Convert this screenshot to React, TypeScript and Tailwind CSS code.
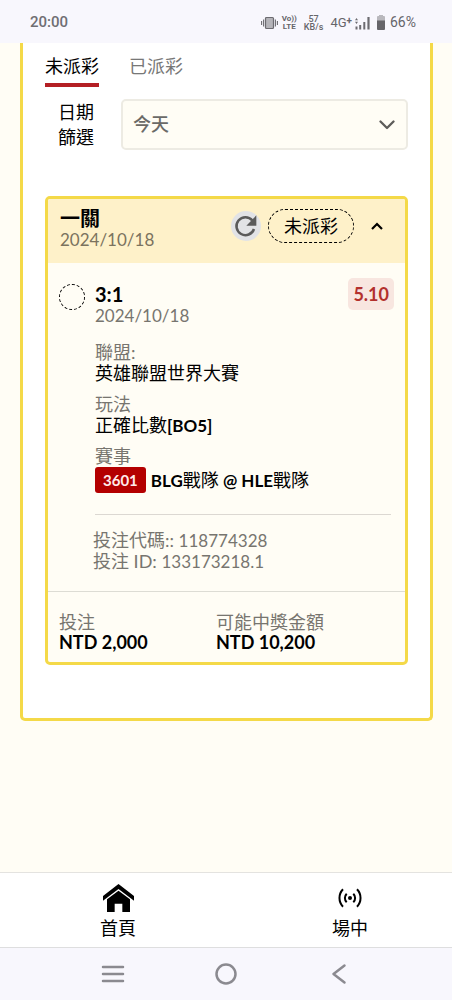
import { useState } from "react";

function StatusBar() {
  return (
    <header className="flex h-[43px] items-center justify-between bg-[#f8f7fd] pt-[2px] pr-9 pl-[30px] font-['Roboto',sans-serif] text-[#66656a]">
      <span className="text-[15px] font-medium text-[#6f6e73]">20:00</span>
      <div className="flex items-center">
        <svg className="h-[14px] w-[17px]" viewBox="0 0 17 14" fill="none" stroke="#6c6b70" aria-hidden="true">
          <rect x="4.500" y="1.500" width="8" height="11" rx="1" fill="#b5b4b9" strokeWidth="1.200" />
          <path d="M.6 5v4M2.600 3.500v7M14.400 3.500v7M16.400 5v4" strokeWidth="1.100" />
        </svg>
        <div className="ml-1 text-center text-[8px] leading-[8px] font-bold">
          <div>Vo))</div>
          <div>LTE</div>
        </div>
        <div className="ml-[7px] text-center text-[9px] leading-[8px] font-medium">
          <div>57</div>
          <div>KB/s</div>
        </div>
        <div className="ml-[7px] flex text-[13px] leading-4">
          4G<span className="text-[10px] leading-3 font-bold">+</span>
        </div>
        <svg className="ml-[3px] h-[14px] w-[15px]" viewBox="0 0 15 14" fill="#6c6b70" aria-hidden="true">
          <path d="M4.200 9h2v4.500h-2zM8.300 6h2v7.500h-2zM12.400 1h2.200v12.500h-2.200zM.5 10.500h2v3h-2zM1.500 2l1.500 2.200H0zM1.500 8L0 5.800h3z" />
        </svg>
        <svg className="ml-[7px] h-[15px] w-[8px]" viewBox="0 0 8 15" aria-hidden="true">
          <path d="M2 0h4v1h1a1 1 0 0 1 1 1V6H0V2a1 1 0 0 1 1-1h1z" fill="#b9b8bd" />
          <path d="M0 5.500h8V14a1 1 0 0 1-1 1H1a1 1 0 0 1-1-1z" fill="#66656a" />
        </svg>
        <span className="ml-[5px] text-[14px]">66%</span>
      </div>
    </header>
  );
}

function RefreshIcon() {
  return (
    <svg className="size-[30px]" viewBox="0 0 90 90" aria-hidden="true">
      <circle cx="45" cy="45" r="45" fill="#e2e3e6" />
      <path d="M64 28A27 27 0 1 0 69 54" fill="none" stroke="#5b5b5b" strokeWidth="7.500" />
      <path d="M76 13v31H46z" fill="#5b5b5b" />
    </svg>
  );
}

function Detail({ label, children }: { label: string; children: React.ReactNode }) {
  return (
    <div>
      <dt className="text-[#77756f]">{label}</dt>
      <dd>{children}</dd>
    </div>
  );
}

function BetCard() {
  const [open, setOpen] = useState(true);
  return (
    <article className="mt-[46px] overflow-hidden rounded-[5px] border-3 border-[#f4d948] bg-[#fffdf5]">
      <div className="flex items-start justify-between bg-[#fef1c9] px-3 pt-2 pb-3">
        <div className="leading-[22px]">
          <h2 className="text-[20px] font-bold">一關</h2>
          <time className="block text-[17px] text-[#7b735e]">2024/10/18</time>
        </div>
        <div className="-mr-[3px] flex items-center pt-[2px]">
          <button type="button" aria-label="重新整理">
            <RefreshIcon />
          </button>
          <span className="ml-[7px] flex h-[34px] items-center rounded-full border border-dashed border-black px-[15px]">
            未派彩
          </span>
          <button
            type="button"
            aria-label="展開或收合"
            aria-expanded={open}
            onClick={() => setOpen(!open)}
            className="ml-1 flex h-[34px] w-[38px] items-center justify-center"
          >
            <svg className={open ? "h-[8px] w-[12px]" : "h-[8px] w-[12px] rotate-180"} viewBox="0 0 12 8" fill="none" stroke="black" strokeWidth="2.200" aria-hidden="true">
              <path d="M1 7l5-5 5 5" />
            </svg>
          </button>
        </div>
      </div>

      {open && (
        <div className="px-[11px] pt-[15px] pb-[19px]">
          <div className="flex items-start">
            <span className="mt-[6px] size-[26px] rounded-full border border-dashed border-black" />
            <div className="mt-[6px] ml-[10px] flex-1 leading-[21px]">
              <h3 className="text-[20px] leading-[21px] font-bold">3:1</h3>
              <time className="block text-[17px] text-[#77756f]">2024/10/18</time>
            </div>
            <strong className="flex h-8 items-center rounded-[5px] bg-[#f8e6e0] px-[5px] font-bold text-[#b3302d]">
              5.10
            </strong>
          </div>
          <dl className="mt-4 flex flex-col gap-[10px] pl-9 leading-[21px]">
            <Detail label="聯盟:">英雄聯盟世界大賽</Detail>
            <Detail label="玩法">
              正確比數<b className="text-[17px]">[BO5]</b>
            </Detail>
            <Detail label="賽事">
              <span className="flex items-center gap-[5px]">
                <span className="flex h-[26px] items-center rounded-[3px] bg-[#b40000] px-2 text-[15px] font-bold text-[#ffeaea]">
                  3601
                </span>
                <span>
                  <b className="text-[17px]">BLG</b>戰隊<b className="text-[17px]"> @ HLE</b>戰隊
                </span>
              </span>
            </Detail>
          </dl>
          <hr className="mt-[21px] mr-[3px] ml-9 border-[#dcd8d2]" />
          <div className="mt-[15px] pl-[34px] leading-5 text-[#77756f]">
            <p>
              投注代碼:: <span className="text-[17px]">118774328</span>
            </p>
            <p>
              投注 ID: <span className="text-[17px]">133173218.1</span>
            </p>
          </div>
        </div>
      )}

      <dl className="grid grid-cols-[157px_1fr] border-t border-[#dddcd4] px-[11px] pt-5 pb-[10px] leading-5">
        <div>
          <dt className="text-[#77756f]">投注</dt>
          <dd className="font-bold">NTD 2,000</dd>
        </div>
        <div>
          <dt className="text-[#77756f]">可能中獎金額</dt>
          <dd className="font-bold">NTD 10,200</dd>
        </div>
      </dl>
    </article>
  );
}

function BottomNav() {
  return (
    <nav className="mt-auto flex h-[75px] justify-between border-t border-[#e4e3e0] bg-white pr-[84px] pl-[100px]">
      <a href="#home" className="flex flex-col items-center pt-[11px]">
        <svg className="h-7 w-[31px]" viewBox="309 72 93 84" aria-hidden="true">
          <path d="M355.500 72L402 108v14L355.500 87 309 122v-14z" />
          <path d="M355.500 92L390 118v38h-23v-25h-23v25h-23v-38z" />
        </svg>
        <span className="mt-1 leading-6">首頁</span>
      </a>
      <a href="#live" className="flex flex-col items-center pt-[11px]">
        <svg className="h-7 w-6" viewBox="0 0 24 28" fill="none" stroke="black" strokeWidth="2" aria-hidden="true">
          <circle cx="12" cy="14" r="2" fill="black" stroke="none" />
          <path d="M8.700 9.700a6 6 0 0 0 0 8.600M15.300 9.700a6 6 0 0 1 0 8.600M5 5.300a12.500 12.500 0 0 0 0 17.400M19 5.300a12.500 12.500 0 0 1 0 17.400" />
        </svg>
        <span className="mt-1 leading-6">場中</span>
      </a>
    </nav>
  );
}

function SystemBar() {
  return (
    <footer className="grid h-[53px] grid-cols-3 items-center justify-items-center border-t border-[#dededf] bg-[#f8f7fd] px-14">
      <button type="button" aria-label="最近使用">
        <svg className="h-6 w-6" viewBox="0 0 24 24" stroke="#8b8a90" strokeWidth="2.500" strokeLinecap="round" aria-hidden="true">
          <path d="M2 5h20M2 12h20M2 19h20" />
        </svg>
      </button>
      <button type="button" aria-label="主畫面">
        <svg className="h-6 w-6" viewBox="0 0 24 24" fill="none" stroke="#8b8a90" strokeWidth="2.500" aria-hidden="true">
          <circle cx="12" cy="12" r="9.500" />
        </svg>
      </button>
      <button type="button" aria-label="返回">
        <svg className="h-6 w-6" viewBox="0 0 24 24" fill="none" stroke="#8b8a90" strokeWidth="2.500" strokeLinecap="round" strokeLinejoin="round" aria-hidden="true">
          <path d="M17.500 3.500L6.500 12l11 8.500" />
        </svg>
      </button>
    </footer>
  );
}

export default function App() {
  const [tab, setTab] = useState("未派彩");
  return (
    <div
      lang="zh-Hant"
      className="flex min-h-screen flex-col bg-[#fffdf5] font-['Lato','Noto_Sans_CJK_TC',sans-serif] text-[18px] text-black"
    >
      <StatusBar />
      <main className="mr-[19px] mb-10 ml-5 rounded-b-[5px] border-3 border-t-0 border-[#f4d948] bg-white px-[22px] pb-[53px]">
        <div role="tablist" className="flex gap-[30px]">
          {["未派彩", "已派彩"].map((name) => (
            <button
              key={name}
              type="button"
              role="tab"
              aria-selected={tab === name}
              onClick={() => setTab(name)}
              className={
                tab === name
                  ? "flex h-11 items-center border-b-4 border-[#b41f24] pt-[6px]"
                  : "flex h-11 items-center border-b-4 border-transparent pt-[6px] text-[#777777]"
              }
            >
              {name}
            </button>
          ))}
        </div>
        <div className="mt-3 flex items-center">
          <label htmlFor="date-filter" className="w-[62px] shrink-0 px-3 text-center leading-[25px]">
            日期篩選
          </label>
          <div className="relative ml-[14px] flex-1">
            <select
              id="date-filter"
              className="block h-[51px] w-full appearance-none rounded-[5px] border-2 border-[#edebe3] bg-[#fffdf5] pl-[10px] font-medium text-[#6b6a67]"
            >
              <option>今天</option>
            </select>
            <svg className="pointer-events-none absolute top-[21px] right-[13px] h-[10px] w-4" viewBox="0 0 16 10" fill="none" stroke="#5d5c59" strokeWidth="2.300" strokeLinecap="round" strokeLinejoin="round" aria-hidden="true">
              <path d="M1.500 1.500L8 8l6.500-6.500" />
            </svg>
          </div>
        </div>
        <BetCard />
      </main>
      <BottomNav />
      <SystemBar />
    </div>
  );
}
